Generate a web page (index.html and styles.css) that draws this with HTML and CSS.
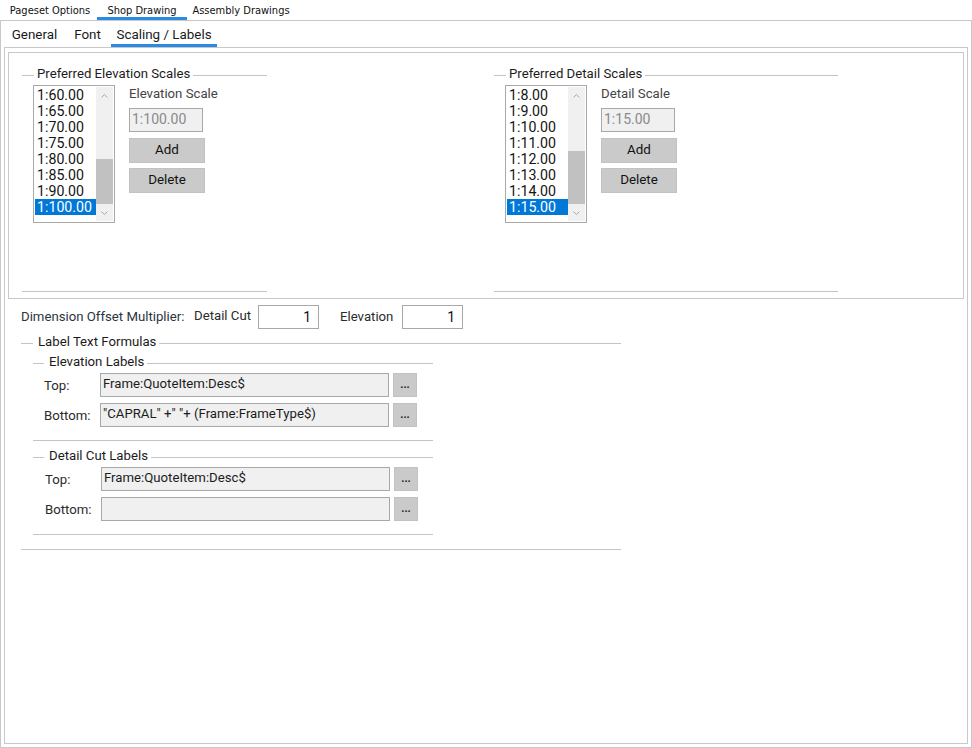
FILE: index.html
```html
<!DOCTYPE html>
<html>
<head>
<meta charset="utf-8">
<title>Shop Drawing - Scaling / Labels</title>
<link rel="stylesheet" href="styles.css">
</head>
<body>
<div class="window">
  <div class="tabs1">
    <div class="tab1 tw1">Pageset Options</div>
    <div class="tab1 tw2 active">Shop Drawing</div>
    <div class="tab1 tw3">Assembly Drawings</div>
  </div>
  <div class="panel1">
    <div class="tabs2">
      <div class="tab2 uw1">General</div>
      <div class="tab2 uw2">Font</div>
      <div class="tab2 uw3 active">Scaling / Labels</div>
    </div>
    <div class="panel2">
      <div class="scales">
        <div class="gb gb-elev">
          <div class="gb-head"><span class="gb-title">Preferred Elevation Scales</span></div>
          <div class="scale-body">
            <div class="listbox">
              <div class="items">
                <div class="item">1:60.00</div>
                <div class="item">1:65.00</div>
                <div class="item">1:70.00</div>
                <div class="item">1:75.00</div>
                <div class="item">1:80.00</div>
                <div class="item">1:85.00</div>
                <div class="item">1:90.00</div>
                <div class="item sel">1:100.00</div>
              </div>
              <div class="vscroll">
                <div class="sb-btn"><svg width="7" height="4" viewBox="0 0 7 4"><path d="M0.5 3.5 L3.5 0.5 L6.5 3.5" fill="none" stroke="#a8a8a8" stroke-width="1"/></svg></div>
                <div class="sb-track"><div class="sb-thumb thumb-elev"></div></div>
                <div class="sb-btn"><svg width="7" height="4" viewBox="0 0 7 4"><path d="M0.5 0.5 L3.5 3.5 L6.5 0.5" fill="none" stroke="#a8a8a8" stroke-width="1"/></svg></div>
              </div>
            </div>
            <div class="scale-side">
              <div class="side-label">Elevation Scale</div>
              <div class="ro-input">1:100.00</div>
              <div class="btn btn-add">Add</div>
              <div class="btn btn-del">Delete</div>
            </div>
          </div>
        </div>
        <div class="gb gb-detail">
          <div class="gb-head"><span class="gb-title">Preferred Detail Scales</span></div>
          <div class="scale-body">
            <div class="listbox">
              <div class="items">
                <div class="item">1:8.00</div>
                <div class="item">1:9.00</div>
                <div class="item">1:10.00</div>
                <div class="item">1:11.00</div>
                <div class="item">1:12.00</div>
                <div class="item">1:13.00</div>
                <div class="item">1:14.00</div>
                <div class="item sel">1:15.00</div>
              </div>
              <div class="vscroll">
                <div class="sb-btn"><svg width="7" height="4" viewBox="0 0 7 4"><path d="M0.5 3.5 L3.5 0.5 L6.5 3.5" fill="none" stroke="#a8a8a8" stroke-width="1"/></svg></div>
                <div class="sb-track"><div class="sb-thumb thumb-detail"></div></div>
                <div class="sb-btn"><svg width="7" height="4" viewBox="0 0 7 4"><path d="M0.5 0.5 L3.5 3.5 L6.5 0.5" fill="none" stroke="#a8a8a8" stroke-width="1"/></svg></div>
              </div>
            </div>
            <div class="scale-side">
              <div class="side-label">Detail Scale</div>
              <div class="ro-input">1:15.00</div>
              <div class="btn btn-add">Add</div>
              <div class="btn btn-del">Delete</div>
            </div>
          </div>
        </div>
      </div>

      <div class="dim-row">
        <div class="dim-label">Dimension Offset Multiplier:</div>
        <div class="dc-label">Detail Cut</div>
        <div class="num-input">1</div>
        <div class="el-label">Elevation</div>
        <div class="num-input">1</div>
      </div>

      <div class="gb gb-form">
        <div class="gb-head head-form"><span class="gb-title">Label Text Formulas</span></div>
        <div class="gb gb-sub">
          <div class="gb-head head-sub"><span class="gb-title">Elevation Labels</span></div>
          <div class="sub-rows">
            <div class="frow">
              <div class="frow-label">Top:</div>
              <div class="f-input">Frame:QuoteItem:Desc$</div>
              <div class="f-btn">...</div>
            </div>
            <div class="frow">
              <div class="frow-label">Bottom:</div>
              <div class="f-input">"CAPRAL" +" "+ (Frame:FrameType$)</div>
              <div class="f-btn">...</div>
            </div>
          </div>
        </div>
        <div class="gb gb-sub gb-sub2">
          <div class="gb-head head-sub"><span class="gb-title">Detail Cut Labels</span></div>
          <div class="sub-rows rows2">
            <div class="frow">
              <div class="frow-label">Top:</div>
              <div class="f-input">Frame:QuoteItem:Desc$</div>
              <div class="f-btn">...</div>
            </div>
            <div class="frow">
              <div class="frow-label">Bottom:</div>
              <div class="f-input"></div>
              <div class="f-btn">...</div>
            </div>
          </div>
        </div>
      </div>
    </div>
  </div>
</div>
</body>
</html>
```

FILE: styles.css
```css
* { box-sizing: border-box; }
html, body { margin: 0; padding: 0; background: #ffffff; }
body {
  font-family: Roboto, "Liberation Sans", sans-serif;
  font-size: 13.2px;
  color: #1c1c1c;
  width: 972px;
  height: 748px;
  overflow: hidden;
}
.window { width: 972px; height: 748px; display: flex; flex-direction: column; }

/* top tab strip */
.tabs1 {
  display: flex;
  height: 20px;
  padding-left: 3px;
  font-family: "DejaVu Sans Condensed", "Liberation Sans", sans-serif;
  font-size: 11px;
  color: #111111;
}
.tab1 {
  height: 20px;
  padding-top: 4px;
  line-height: 13px;
  text-align: center;
  white-space: nowrap;
  border-bottom: 3px solid transparent;
}
.tab1.active { border-bottom-color: #2b8ae4; }
.tw1 { width: 94px; }
.tw2 { width: 90px; }
.tw3 { width: 108px; }

.panel1 {
  flex: 1;
  border: 1px solid #c8c8c8;
  padding: 0 3px 3px 3px;
  display: flex;
  flex-direction: column;
}

/* second tab strip */
.tabs2 { display: flex; height: 26px; margin-left: 1px; font-size: 13.4px; }
.tab2 {
  height: 26px;
  padding-top: 6px;
  line-height: 16px;
  text-align: center;
  white-space: nowrap;
  color: #1a1a1a;
  border-bottom: 3px solid transparent;
}
.tab2 + .tab2 { margin-left: 4px; }
.tab2.active { border-bottom-color: #2b8ae4; }
.uw1 { width: 59px; }
.uw2 { width: 39px; }
.uw3 { width: 106px; }

.panel2 {
  flex: 1;
  border: 1px solid #c8c8c8;
  padding: 4px 3px 0 3px;
}

/* scales frame */
.scales {
  border: 1px solid #c8c8c8;
  height: 247px;
  padding: 14px 0 0 13px;
  display: flex;
  align-items: flex-start;
}

.gb { display: flex; flex-direction: column; border-bottom: 1px solid #c4c4c4; }
.gb-elev { width: 245px; height: 225px; }
.gb-detail { width: 344px; height: 225px; margin-left: 227px; }

.gb-head { display: flex; height: 16px; }
.gb-head::before {
  content: "";
  width: 12px;
  height: 1px;
  margin-top: 8px;
  background: #c4c4c4;
}
.gb-head::after {
  content: "";
  flex: 1;
  height: 1px;
  margin-top: 8px;
  background: #c4c4c4;
}
.gb-title { line-height: 14px; padding: 0 3px; white-space: nowrap; color: #1c1c1c; }

.scale-body { display: flex; padding: 2px 0 0 11px; }

.listbox {
  width: 82px;
  height: 138px;
  border: 1px solid #a8a8a8;
  padding: 1px;
  display: flex;
  background: #ffffff;
}
.items { width: 61px; font-size: 14.2px; line-height: 16px; color: #141414; }
.item { height: 16px; padding-left: 2px; white-space: nowrap; }
.item.sel { background: #0078d7; color: #ffffff; }

.vscroll { width: 17px; display: flex; flex-direction: column; background: #f0f0f0; }
.sb-btn { height: 17px; display: flex; align-items: center; justify-content: center; }
.sb-btn svg { display: block; }
.sb-track { flex: 1; display: flex; flex-direction: column; justify-content: flex-end; }
.sb-thumb { background: #c1c1c1; }
.thumb-elev { height: 45px; }
.thumb-detail { height: 53px; }

.scale-side { margin-left: 14px; display: flex; flex-direction: column; align-items: flex-start; }
.side-label { height: 16px; line-height: 16px; color: #444444; white-space: nowrap; margin-top: 1px; }
.ro-input {
  margin-top: 6px;
  width: 74px;
  height: 24px;
  border: 1px solid #a8a8a8;
  background: #f0f0f0;
  color: #8a8a8a;
  font-size: 14px;
  line-height: 20px;
  padding-left: 2px;
}
.btn {
  width: 76px;
  height: 25px;
  background: #cacaca;
  border: 1px solid #c2c2c2;
  text-align: center;
  line-height: 21px;
  font-size: 13.4px;
  color: #111111;
}
.btn-add { margin-top: 6px; }
.btn-del { margin-top: 5px; }

/* dimension offset row */
.dim-row {
  display: flex;
  align-items: center;
  height: 24px;
  margin-top: 6px;
  padding-left: 13px;
  line-height: 16px;
}
.dim-label { width: 173px; color: #2b3440; white-space: nowrap; }
.dc-label { width: 64px; color: #2b2b2b; margin-top: -2px; white-space: nowrap; }
.el-label { width: 62px; margin-left: 21px; color: #2b2b2b; white-space: nowrap; }
.num-input {
  width: 61px;
  height: 24px;
  border: 1px solid #a8a8a8;
  background: #ffffff;
  text-align: right;
  padding-right: 7px;
  line-height: 22px;
  font-size: 14px;
  color: #111111;
}

/* label formulas */
.gb-form { width: 600px; margin: 6px 0 0 13px; padding-bottom: 14px; }
.head-form .gb-title { padding-left: 5px; }
.gb-sub { width: 400px; margin: 4px 0 0 12px; }
.gb-sub2 { margin-top: 8px; }
.head-sub::before { width: 11px; }
.head-sub .gb-title { padding-left: 5px; }
.sub-rows { padding: 2px 0 13px 11px; }
.rows2 { padding-left: 12px; }
.frow { display: flex; align-items: center; height: 24px; }
.frow + .frow { margin-top: 6px; }
.frow-label { width: 56px; color: #2b2b2b; }
.f-input {
  width: 289px;
  height: 24px;
  border: 1px solid #a8a8a8;
  background: #f0f0f0;
  padding-left: 2px;
  line-height: 20px;
  color: #1c1c1c;
  white-space: nowrap;
  overflow: hidden;
}
.f-btn {
  width: 24px;
  height: 24px;
  margin-left: 4px;
  background: #cacaca;
  border: 1px solid #c2c2c2;
  text-align: center;
  font-size: 11px;
  font-weight: bold;
  line-height: 22px;
  color: #1c1c1c;
}
```
